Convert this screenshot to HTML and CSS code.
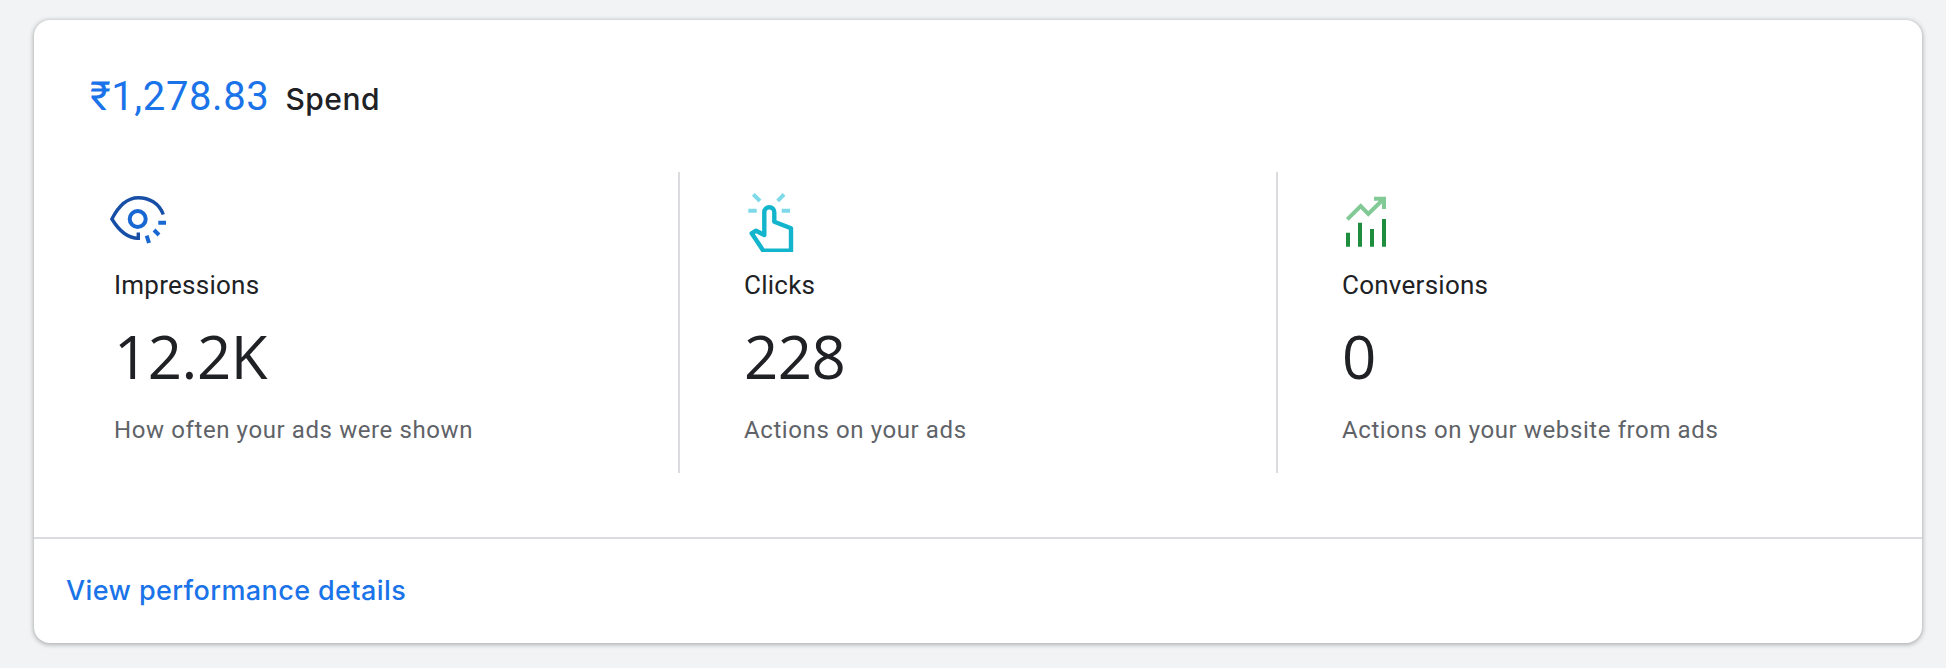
FILE: index.html
```html
<!DOCTYPE html>
<html>
	<head>
		<title>Overview</title>
		<link rel="stylesheet" href="styles.css">
	</head>
	<body>
		<div class="card">
			<div class="spend">
				<span class="spend-value">₹1,278.83</span>
				<span class="spend-label">Spend</span>
			</div>
			<div class="metrics">
				<div class="metric">
					<svg class="icon" viewBox="0 0 60 60" fill="none">
						<path d="M53.3 22.5C49 11 39 5.7 28.3 5.7C17 5.7 8 15 1.9 27C8 37 17 46.3 28.3 46.3" stroke="#174ea6" stroke-width="3.4"/>
						<path d="M28.3 40.5V48" stroke="#174ea6" stroke-width="3.4"/>
						<circle cx="27.7" cy="27" r="8" stroke="#1967d2" stroke-width="4"/>
						<path d="M48.3 30.7H56M44 38L49 43M36.7 43.7L39 51" stroke="#1967d2" stroke-width="4"/>
					</svg>
					<div class="metric-name">Impressions</div>
					<div class="metric-value">12.2K</div>
					<div class="metric-note">How often your ads were shown</div>
				</div>
				<div class="metric">
					<svg class="icon" viewBox="0 0 60 60" fill="none">
						<path d="M13.3 2.3L20 9M44 2.3L37.7 9M8.3 18.7H16.7M41.7 18.7H50" stroke="#7ed9e8" stroke-width="4"/>
						<path d="M24.3 43V20.3C24.3 17 26.5 15.3 29.3 15.3C32.1 15.3 34.3 17 34.3 20.3V29.7L51 36.3V58.7H23.3L11.7 41.3L16 38.7Z" stroke="#12b5cb" stroke-width="4.4" stroke-linejoin="round"/>
					</svg>
					<div class="metric-name">Clicks</div>
					<div class="metric-value">228</div>
					<div class="metric-note">Actions on your ads</div>
				</div>
				<div class="metric">
					<svg class="icon" viewBox="0 0 60 60" fill="none">
						<path d="M9.3 27.3L22.7 14L30.3 22L45.3 7.3M36 6.7H46V17" stroke="#81c995" stroke-width="4"/>
						<path d="M10 40.7V54.7M22 30.7V54.7M34 37V54.7M46 27V54.7" stroke="#1e8e3e" stroke-width="4"/>
					</svg>
					<div class="metric-name">Conversions</div>
					<div class="metric-value">0</div>
					<div class="metric-note">Actions on your website from ads</div>
				</div>
			</div>
			<div class="card-footer">
				<a class="details-link">View performance details</a>
			</div>
		</div>
	</body>
</html>
```

FILE: styles.css
```css
body{
	margin: 0;
	height: 668px;
	padding: 20px 24px 25px 34px;
	box-sizing: border-box;
	background: #f1f3f4;
	font-family: Roboto, sans-serif;
	overflow: hidden;
}
.card{
	height: 623px;
	background: #fff;
	border-radius: 16px;
	box-shadow: 0 1px 4px 1px rgba(60,64,67,.35);
	display: flex;
	flex-direction: column;
}
.spend{
	display: flex;
	align-items: baseline;
	gap: 16px;
	padding: 53px 0 0 56px;
	height: 102px;
	box-sizing: border-box;
}
.spend-value{
	font-size: 40px;
	line-height: 48px;
	letter-spacing: .6px;
	color: #1a73e8;
}
.spend-label{
	font-family: Inter, sans-serif;
	font-size: 30px;
	font-weight: 500;
	letter-spacing: .5px;
	color: #202124;
}
.metrics{
	display: flex;
	height: 301px;
	margin-top: 50px;
	padding-left: 80px;
}
.metric{
	width: 598px;
	box-sizing: border-box;
	padding-left: 64px;
	padding-top: 20px;
	border-left: 2px solid #dadce0;
}
.metric:first-child{
	width: 564px;
	padding-left: 0;
	border-left: 0;
}
.metric:last-child{
	width: auto;
}
.icon{
	display: block;
	width: 60px;
	height: 60px;
	margin-left: -4px;
}
.metric-name{
	margin-top: 17px;
	font-size: 26px;
	line-height: 32px;
	letter-spacing: .25px;
	color: #202124;
}
.metric-value{
	margin-top: 20px;
	font-family: "Open Sans", sans-serif;
	font-size: 60px;
	line-height: 70px;
	letter-spacing: -.5px;
	color: #202124;
}
.metric-note{
	margin-top: 24px;
	font-size: 24px;
	line-height: 30px;
	letter-spacing: .6px;
	color: #5f6368;
}
.card-footer{
	margin-top: auto;
	height: 106px;
	box-sizing: border-box;
	border-top: 2px solid #dadce0;
	padding: 35px 0 0 32px;
}
.details-link{
	font-family: Inter, sans-serif;
	font-size: 27px;
	font-weight: 500;
	letter-spacing: .4px;
	color: #1a73e8;
}
```
